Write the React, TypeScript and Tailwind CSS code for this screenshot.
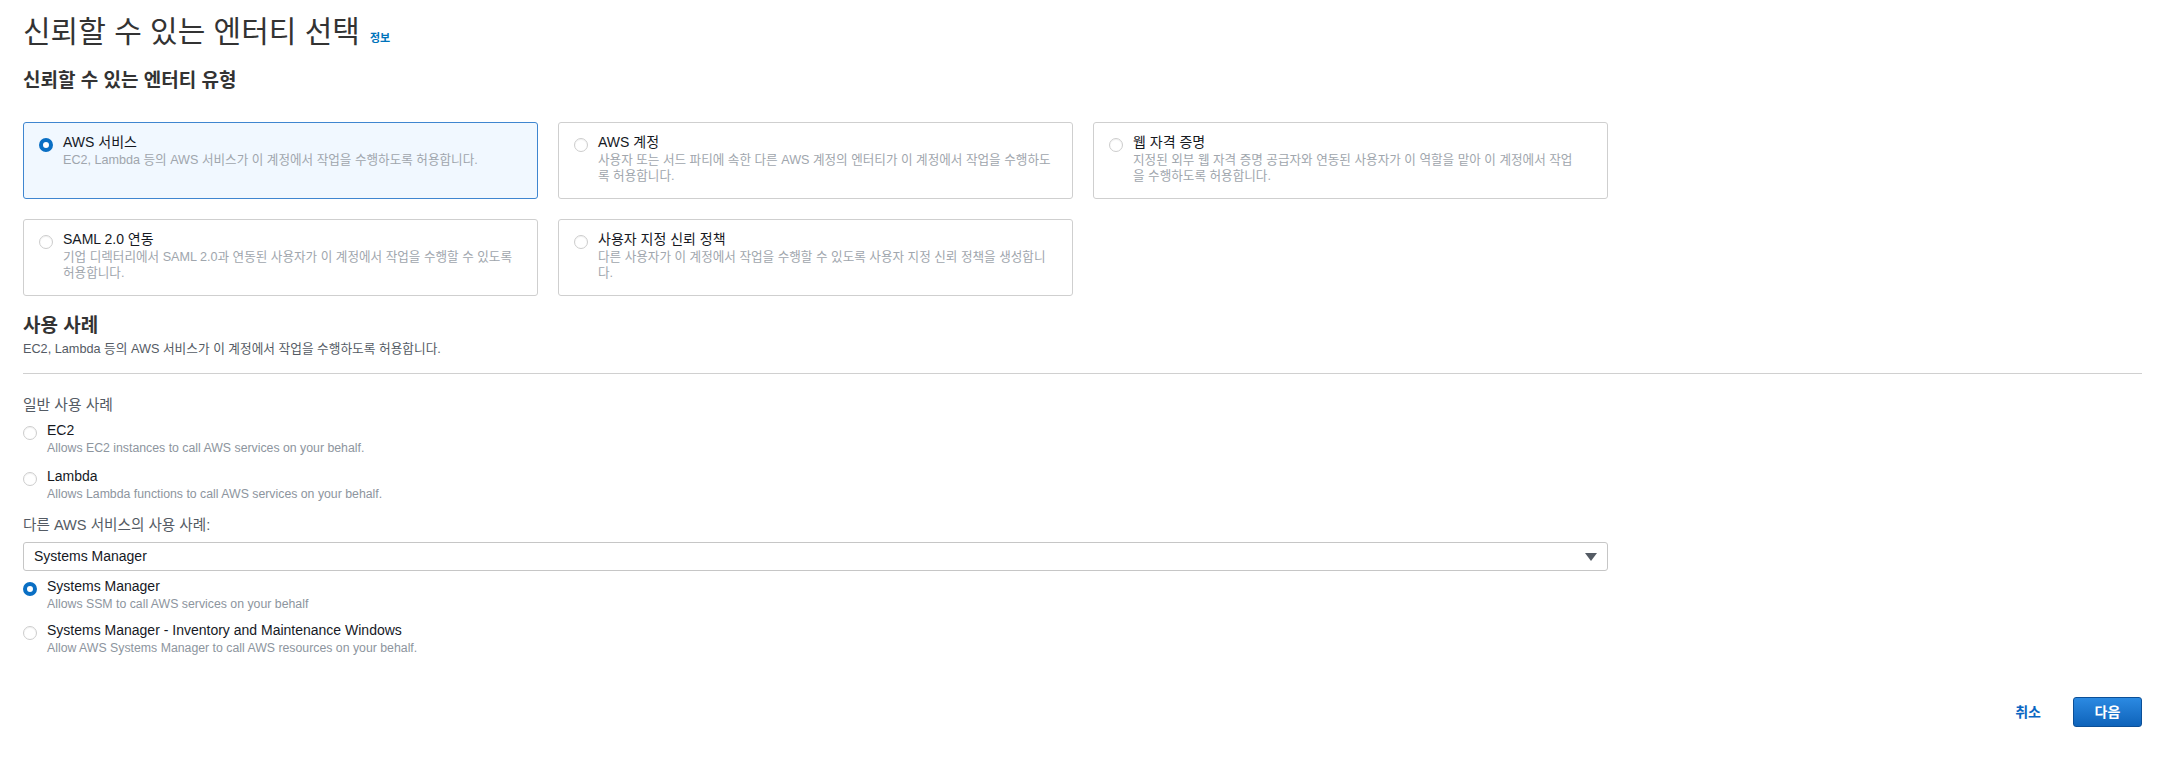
import React from "react";

const font = {
  fontFamily: '"Liberation Sans", Arial, "Noto Sans CJK KR", sans-serif',
};

function Radio({ checked }: { checked?: boolean }) {
  return checked ? (
    <span className="inline-block w-[14px] h-[14px] shrink-0 rounded-full border-[4px] border-[#0a6fc4] bg-white" />
  ) : (
    <span className="inline-block w-[14px] h-[14px] shrink-0 rounded-full border border-[#cdcdcd] bg-white shadow-[inset_0_1px_1px_rgba(0,0,0,0.06)]" />
  );
}

// lines are split where the console wraps them
const cards = [
  {
    title: "AWS 서비스",
    lines: ["EC2, Lambda 등의 AWS 서비스가 이 계정에서 작업을 수행하도록 허용합니다."],
    checked: true,
  },
  {
    title: "AWS 계정",
    lines: [
      "사용자 또는 서드 파티에 속한 다른 AWS 계정의 엔터티가 이 계정에서 작업을 수행하도",
      "록 허용합니다.",
    ],
  },
  {
    title: "웹 자격 증명",
    lines: [
      "지정된 외부 웹 자격 증명 공급자와 연동된 사용자가 이 역할을 맡아 이 계정에서 작업",
      "을 수행하도록 허용합니다.",
    ],
  },
  {
    title: "SAML 2.0 연동",
    lines: [
      "기업 디렉터리에서 SAML 2.0과 연동된 사용자가 이 계정에서 작업을 수행할 수 있도록",
      "허용합니다.",
    ],
  },
  {
    title: "사용자 지정 신뢰 정책",
    lines: [
      "다른 사용자가 이 계정에서 작업을 수행할 수 있도록 사용자 지정 신뢰 정책을 생성합니",
      "다.",
    ],
  },
];

function Option({
  title,
  desc,
  checked,
  className,
}: {
  title: string;
  desc: string;
  checked?: boolean;
  className?: string;
}) {
  return (
    <div className={"flex " + (className ?? "")}>
      <div className="pt-[2px]">
        <Radio checked={checked} />
      </div>
      <div className="ml-[10px]">
        <div className="text-[14px] leading-[18px] text-[#16191f]">{title}</div>
        <div className="text-[12.3px] leading-[16px] mt-[1px] text-[#8d959e]">{desc}</div>
      </div>
    </div>
  );
}

export default function App() {
  return (
    <div className="min-h-[757px] bg-white pl-[23px] pr-[22px] pt-[14px]" style={font}>
      <h1 className="text-[30px] leading-[36px] font-normal text-[#333]">
        신뢰할 수 있는 엔터티 선택
        <span className="ml-[10px] text-[11px] leading-none font-bold text-[#0073bb] align-baseline">
          정보
        </span>
      </h1>
      <h2 className="mt-[19px] text-[19px] leading-[24px] font-bold text-[#333]">
        신뢰할 수 있는 엔터티 유형
      </h2>

      <div className="mt-[29px] grid grid-cols-[515px_515px_515px] gap-x-[20px] gap-y-[20px]">
        {cards.map((c) => (
          <div
            key={c.title}
            className={
              "h-[77px] rounded-[3px] border px-[15px] pt-[10px] flex " +
              (c.checked ? "border-[#3f86d0] bg-[#f1f8ff]" : "border-[#cfcfcf] bg-white")
            }
          >
            <div className="pt-[2px]">
              <Radio checked={c.checked} />
            </div>
            <div className="ml-[10px]">
              <div className="text-[14px] leading-[18px] text-[#16191f]">{c.title}</div>
              <div className="mt-[1px] text-[12.6px] leading-[16px] text-[#a0a6ad] whitespace-nowrap">
                {c.lines.map((l) => (
                  <div key={l}>{l}</div>
                ))}
              </div>
            </div>
          </div>
        ))}
      </div>

      <h2 className="mt-[18px] text-[19px] leading-[24px] font-bold text-[#333]">사용 사례</h2>
      <p className="mt-[3px] text-[12.7px] leading-[16px] text-[#545b64]">
        EC2, Lambda 등의 AWS 서비스가 이 계정에서 작업을 수행하도록 허용합니다.
      </p>
      <div className="mt-[16px] border-t border-[#d0d0d0]" />

      <div className="mt-[21px] text-[14.8px] leading-[20px] text-[#545b64]">일반 사용 사례</div>
      <Option
        className="mt-[6px]"
        title="EC2"
        desc="Allows EC2 instances to call AWS services on your behalf."
      />
      <Option
        className="mt-[11px]"
        title="Lambda"
        desc="Allows Lambda functions to call AWS services on your behalf."
      />

      <div className="mt-[13px] text-[14.6px] leading-[20px] text-[#545b64]">
        다른 AWS 서비스의 사용 사례:
      </div>
      <div className="mt-[7px] w-[1585px] h-[29px] rounded-[3px] border border-[#c6c6c6] bg-white flex items-center justify-between pl-[10px] pr-[10px]">
        <span className="text-[14px] text-[#16191f]">Systems Manager</span>
        <svg width="12" height="8" viewBox="0 0 12 8">
          <path d="M0 0h12L6 8z" fill="#545b64" />
        </svg>
      </div>
      <Option
        className="mt-[6px]"
        checked
        title="Systems Manager"
        desc="Allows SSM to call AWS services on your behalf"
      />
      <Option
        className="mt-[9px]"
        title="Systems Manager - Inventory and Maintenance Windows"
        desc="Allow AWS Systems Manager to call AWS resources on your behalf."
      />

      <div className="mt-[41px] flex items-center justify-end">
        <button className="text-[14px] font-bold text-[#0a66c2]">취소</button>
        <button className="ml-[32px] w-[69px] h-[30px] rounded-[3px] border border-[#0b4f97] bg-gradient-to-b from-[#2b8ae2] to-[#0e63ba] text-[14px] font-bold text-white">
          다음
        </button>
      </div>
    </div>
  );
}
